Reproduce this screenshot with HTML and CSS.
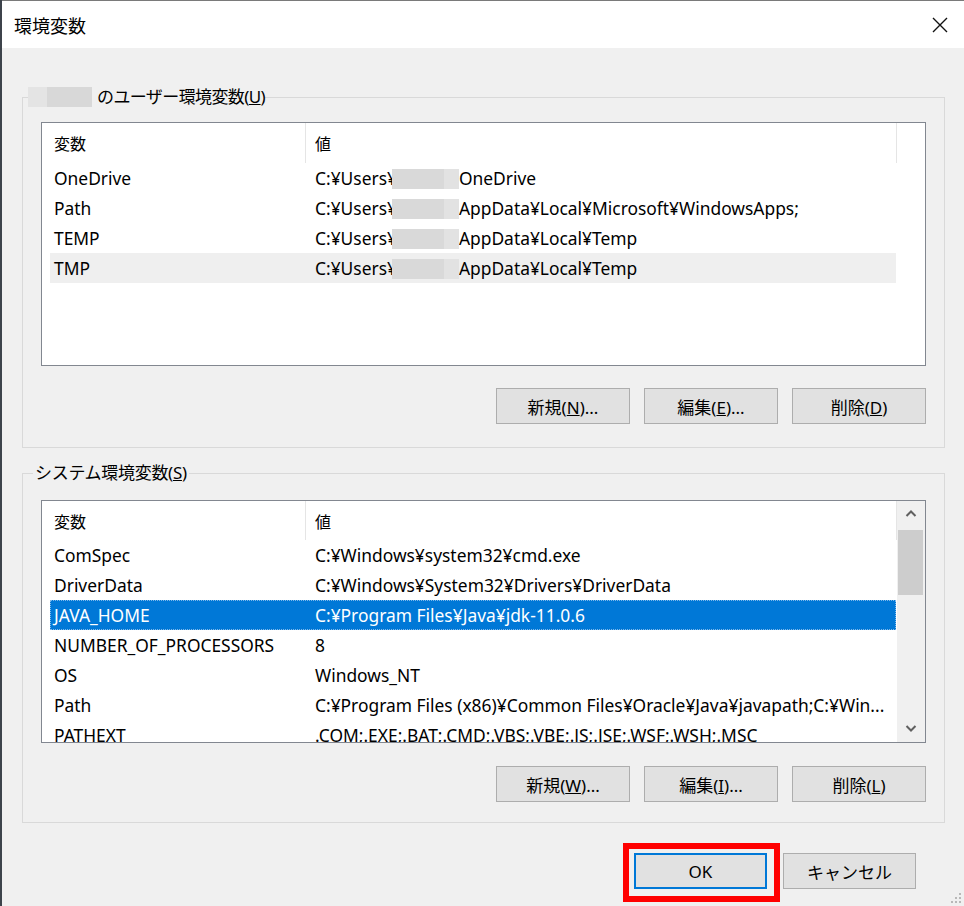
FILE: index.html
```html
<!DOCTYPE html>
<html lang="ja">
<head>
<meta charset="utf-8">
<title>環境変数</title>
<link rel="stylesheet" href="styles.css">
</head>
<body>
<div class="window">
  <div class="titlebar">
    <span class="title">環境変数</span>
    <svg class="close" width="16" height="16" viewBox="0 0 16 16"><path d="M1 1 L15 15 M15 1 L1 15" stroke="#111" stroke-width="1.4" fill="none"/></svg>
  </div>
  <div class="content">
    <fieldset class="group group-user">
      <legend><span class="blur blur-name"></span><span class="legend-text">のユーザー環境変数(<u>U</u>)</span></legend>
      <div class="list list-user">
        <div class="list-head">
          <div class="hcell c1">変数</div>
          <div class="hcell c2">値</div>
        </div>
        <div class="row"><span class="cell c1">OneDrive</span><span class="cell c2">C:¥Users¥<span class="blur blur-user"></span>OneDrive</span></div>
        <div class="row"><span class="cell c1">Path</span><span class="cell c2">C:¥Users¥<span class="blur blur-user"></span>AppData¥Local¥Microsoft¥WindowsApps;</span></div>
        <div class="row"><span class="cell c1">TEMP</span><span class="cell c2">C:¥Users¥<span class="blur blur-user"></span>AppData¥Local¥Temp</span></div>
        <div class="row row-hover"><span class="cell c1">TMP</span><span class="cell c2">C:¥Users¥<span class="blur blur-user"></span>AppData¥Local¥Temp</span></div>
      </div>
      <div class="btns">
        <button class="btn">新規(<u>N</u>)...</button>
        <button class="btn">編集(<u>E</u>)...</button>
        <button class="btn">削除(<u>D</u>)</button>
      </div>
    </fieldset>

    <fieldset class="group group-sys">
      <legend class="legend-sys">システム環境変数(<u>S</u>)</legend>
      <div class="list list-sys">
        <div class="list-main">
          <div class="list-head list-head-sys">
            <div class="hcell c1">変数</div>
            <div class="hcell c2">値</div>
          </div>
          <div class="row"><span class="cell c1">ComSpec</span><span class="cell c2">C:¥Windows¥system32¥cmd.exe</span></div>
          <div class="row"><span class="cell c1">DriverData</span><span class="cell c2">C:¥Windows¥System32¥Drivers¥DriverData</span></div>
          <div class="row row-selected"><span class="cell c1">JAVA_HOME</span><span class="cell c2">C:¥Program Files¥Java¥jdk-11.0.6</span></div>
          <div class="row"><span class="cell c1">NUMBER_OF_PROCESSORS</span><span class="cell c2">8</span></div>
          <div class="row"><span class="cell c1">OS</span><span class="cell c2">Windows_NT</span></div>
          <div class="row"><span class="cell c1">Path</span><span class="cell c2">C:¥Program Files (x86)¥Common Files¥Oracle¥Java¥javapath;C:¥Win...</span></div>
          <div class="row"><span class="cell c1">PATHEXT</span><span class="cell c2">.COM;.EXE;.BAT;.CMD;.VBS;.VBE;.JS;.JSE;.WSF;.WSH;.MSC</span></div>
        </div>
        <div class="scrollbar">
          <svg class="arrow" width="28" height="26" viewBox="0 0 28 26"><path d="M9.5 15 L14 10.5 L18.5 15" stroke="#606060" stroke-width="2" fill="none"/></svg>
          <div class="track"><div class="thumb"></div></div>
          <svg class="arrow" width="28" height="26" viewBox="0 0 28 26"><path d="M9.5 10 L14 14.5 L18.5 10" stroke="#606060" stroke-width="2" fill="none"/></svg>
        </div>
      </div>
      <div class="btns btns-sys">
        <button class="btn">新規(<u>W</u>)...</button>
        <button class="btn">編集(<u>I</u>)...</button>
        <button class="btn">削除(<u>L</u>)</button>
      </div>
    </fieldset>

    <div class="dialog-btns">
      <div class="mark"><button class="btn btn-ok">OK</button></div>
      <button class="btn btn-cancel">キャンセル</button>
    </div>
  </div>
  <svg class="grip" width="12" height="12" viewBox="0 0 12 12">
    <rect x="9" y="1" width="2" height="2" fill="#b8b8b8"/>
    <rect x="5" y="5" width="2" height="2" fill="#b8b8b8"/>
    <rect x="9" y="5" width="2" height="2" fill="#b8b8b8"/>
    <rect x="1" y="9" width="2" height="2" fill="#b8b8b8"/>
    <rect x="5" y="9" width="2" height="2" fill="#b8b8b8"/>
    <rect x="9" y="9" width="2" height="2" fill="#b8b8b8"/>
  </svg>
</div>
</body>
</html>
```

FILE: styles.css
```css
html, body {
  margin: 0;
  padding: 0;
}
body {
  width: 964px;
  height: 906px;
  overflow: hidden;
  background: #f0f0f0;
  color: #000;
  font-family: "Noto Sans", "Noto Sans CJK JP", sans-serif;
  font-size: 17px;
}
.window {
  position: relative;
  height: 906px;
  box-sizing: border-box;
  border-left: 2px solid #3d434b;
  display: flex;
  flex-direction: column;
}
.titlebar {
  height: 48px;
  box-sizing: border-box;
  background: #fff;
  border-top: 1px solid #7a7a7a;
  display: flex;
  align-items: center;
  justify-content: space-between;
  padding: 0 16px 0 12px;
}
.title {
  font-family: "Noto Sans CJK JP", sans-serif;
  font-size: 18px;
  line-height: 20px;
}
.close {
  display: block;
}
.content {
  padding: 39px 19px 0 20px;
  display: flex;
  flex-direction: column;
}
.group {
  margin: 0;
  min-width: 0;
  border: 1px solid #d9d9d9;
  padding: 15px 18px 23px 18px;
}
.group-sys {
  margin-top: 15px;
  padding-top: 17px;
  padding-bottom: 20px;
}
legend {
  height: 20px;
  line-height: 20px;
  font-size: 17px;
  padding: 0;
  margin-left: -13px;
  display: flex;
  align-items: center;
}
.legend-sys {
  margin-left: -8px;
  padding: 0 2px;
  letter-spacing: -0.3px;
}
.legend-text {
  margin-left: 5px;
  letter-spacing: -0.6px;
}
.blur {
  display: inline-block;
  background: linear-gradient(90deg, #e4e4e4 0 30%, #d8d8d8 30% 100%);
}
.blur-name {
  width: 64px;
  height: 20px;
}
.blur-user {
  position: relative;
  width: 67px;
  height: 20px;
  margin-left: -5px;
  vertical-align: -4px;
  background: linear-gradient(90deg, #d9d9d9 0 78%, #e2e2e2 78% 100%);
}
.list {
  background: #fff;
  border: 1px solid #828790;
  box-sizing: border-box;
  overflow: hidden;
  font-size: 17.4px;
}
.list-user {
  height: 244px;
}
.list-sys {
  height: 243px;
  display: flex;
}
.list-main {
  flex: 1;
  overflow: hidden;
}
.list-head {
  display: flex;
  height: 40px;
  align-items: stretch;
}
.list-head-sys {
  height: 39px;
}
.hcell {
  box-sizing: border-box;
  display: flex;
  align-items: center;
  border-right: 1px solid #e5e5e5;
  font-family: "Noto Sans CJK JP", sans-serif;
  font-size: 16px;
}
.list-head .c1 {
  width: 264px;
  padding-left: 12px;
}
.list-head .c2 {
  width: 591px;
  padding-left: 9px;
}
.row {
  display: flex;
  height: 30px;
  line-height: 30px;
  margin-left: 8px;
  width: 846px;
  white-space: nowrap;
}
.cell {
  display: block;
  padding-left: 4px;
  box-sizing: border-box;
}
.row .c1 {
  width: 261px;
}
.row .c2 {
  flex: 1;
  overflow: hidden;
}
.row-hover {
  background: #efefef;
}
.row-selected {
  background: #0078d7;
  color: #fff;
  outline: 1px dotted #7fb8ea;
  outline-offset: -1px;
}
.scrollbar {
  width: 28px;
  background: #f0f0f0;
  display: flex;
  flex-direction: column;
}
.arrow {
  display: block;
}
.track {
  flex: 1;
  padding: 3px 2px 0 1px;
}
.thumb {
  height: 65px;
  background: #cdcdcd;
}
.btns {
  display: flex;
  justify-content: flex-end;
  gap: 14px;
  margin-top: 22px;
}
.btns-sys {
  margin-top: 23px;
}
.btn {
  width: 134px;
  height: 36px;
  box-sizing: border-box;
  border: 1px solid #adadad;
  background: #e1e1e1;
  color: #000;
  font-family: "Noto Sans", "Noto Sans CJK JP", sans-serif;
  font-size: 17px;
  padding: 0;
  margin: 0;
}
.dialog-btns {
  display: flex;
  justify-content: flex-end;
  align-items: flex-start;
  margin-top: 20px;
  padding-right: 29px;
}
.mark {
  border: 6px solid #ff0000;
  padding: 4px 7px 7px 5px;
}
.btn-ok {
  width: 133px;
  border: 2px solid #0078d7;
}
.btn-cancel {
  margin-left: 3px;
  margin-top: 10px;
  width: 133px;
}
.grip {
  position: absolute;
  right: 2px;
  bottom: 2px;
}
```
